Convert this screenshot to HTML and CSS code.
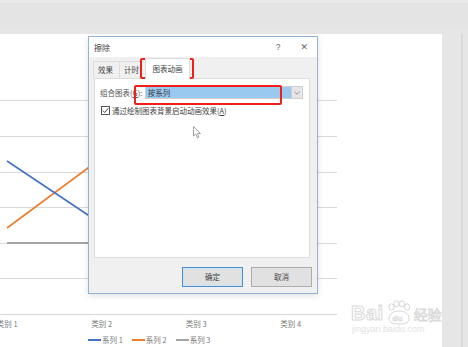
FILE: index.html
```html
<!DOCTYPE html>
<html lang="zh">
<head>
<meta charset="utf-8">
<link rel="stylesheet" href="styles.css">
</head>
<body>
<div class="screen">
  <div class="topbar"></div>
  <div class="workspace">
    <div class="slide">
      <svg class="plot" width="337" height="282" viewBox="0 0 337 282">
        <g stroke="#d9d9d9" stroke-width="1">
          <line x1="0" y1="66.5" x2="337" y2="66.5"/>
          <line x1="0" y1="102.5" x2="337" y2="102.5"/>
          <line x1="0" y1="138.5" x2="337" y2="138.5"/>
          <line x1="0" y1="173.5" x2="337" y2="173.5"/>
          <line x1="0" y1="209.5" x2="337" y2="209.5"/>
          <line x1="0" y1="244.5" x2="337" y2="244.5"/>
          <line x1="0" y1="280.5" x2="337" y2="280.5"/>
        </g>
        <polyline fill="none" stroke="#a5a5a5" stroke-width="2" points="7,209 101.5,209 196,173 290.5,138"/>
        <polyline fill="none" stroke="#ed7d31" stroke-width="1.6" points="7,194 101.5,124 196,160 290.5,102"/>
        <polyline fill="none" stroke="#4472c4" stroke-width="1.6" points="7,127 101.5,190 196,150 290.5,95"/>
      </svg>
      <div class="cats">
        <span>类别 1</span><span>类别 2</span><span>类别 3</span><span>类别 4</span>
      </div>
      <div class="legend">
        <span class="key"><i class="sw blue"></i>系列 1</span>
        <span class="key"><i class="sw orange"></i>系列 2</span>
        <span class="key"><i class="sw gray"></i>系列 3</span>
      </div>
      <div class="watermark">
        <div class="wm-top">
          <span class="wm-bai">Bai</span>
          <svg class="wm-paw" width="28" height="25" viewBox="0 0 28 25">
            <g fill="none" stroke="#d6d6d6" stroke-width="1">
              <ellipse cx="6.5" cy="7" rx="2.6" ry="3.2"/>
              <ellipse cx="11.5" cy="3.8" rx="2.6" ry="3"/>
              <ellipse cx="17" cy="3.8" rx="2.6" ry="3"/>
              <ellipse cx="22" cy="7" rx="2.6" ry="3.2"/>
              <path d="M4 19 C4 13 9 11 14 11 C19 11 24 13 24 19 C24 23 19 24 14 24 C9 24 4 23 4 19 Z"/>
            </g>
            <text x="7.5" y="21" class="wm-du">du</text>
          </svg>
          <span class="wm-cn">经验</span>
        </div>
        <div class="wm-url">jingyan.baidu.com</div>
      </div>
    </div>
    <div class="rightpane"><div class="rline"></div></div>
  </div>

  <div class="dialog">
    <div class="titlebar">
      <span class="title">擦除</span>
      <span class="tb-btns"><span class="help">?</span><span class="close">✕</span></span>
    </div>
    <div class="dbody">
      <div class="tabs">
        <span class="tab">效果</span>
        <span class="tab">计时</span>
        <span class="tab active">图表动画</span>
      </div>
      <div class="panel">
        <div class="row">
          <span class="label">组合图表(<u>G</u>):</span>
          <div class="select">
            <span class="sel-text">按系列</span>
            <span class="sel-btn">
              <svg width="6" height="4" viewBox="0 0 6 4"><path d="M0.5 0.8 L3 3.2 L5.5 0.8" fill="none" stroke="#888" stroke-width="0.9"/></svg>
            </span>
          </div>
        </div>
        <div class="row check-row">
          <span class="checkbox">
            <svg width="9" height="9" viewBox="0 0 9 9"><path d="M1.8 4.6 L3.7 6.5 L7.3 2.3" fill="none" stroke="#444" stroke-width="1"/></svg>
          </span>
          <span class="check-label">通过绘制图表背景启动动画效果(<u>A</u>)</span>
        </div>
      </div>
      <div class="buttons">
        <span class="btn primary">确定</span>
        <span class="btn">取消</span>
      </div>
    </div>
  </div>

  <div class="hl hl-tab"></div>
  <div class="hl hl-select"></div>
  <svg class="cursor" width="9" height="13" viewBox="0 0 9 13">
    <path d="M0.5 0.5 L0.5 10 L2.8 8 L4.4 11.8 L6 11.1 L4.4 7.5 L7.5 7.5 Z" fill="#fff" stroke="#8a8a8a" stroke-width="0.8"/>
  </svg>
</div>
</body>
</html>
```

FILE: styles.css
```css
* { box-sizing: border-box; }
html, body { margin: 0; padding: 0; }
body {
  width: 468px;
  height: 347px;
  overflow: hidden;
  background: #e6e6e6;
  font-family: "Noto Sans CJK SC", "Liberation Sans", sans-serif;
}
.screen {
  position: relative;
  width: 468px;
  height: 347px;
  overflow: hidden;
  display: flex;
  flex-direction: column;
}
.topbar {
  height: 34px;
  flex: none;
  background: linear-gradient(#e9e9e9 0, #e9e9e9 3px, #e4e4e4 3px, #e4e4e4 27px, #e6e6e6 28px);
}
.workspace {
  flex: 1;
  display: flex;
}
.slide {
  width: 442px;
  height: 313px;
  background: #fff;
  position: relative;
  display: flex;
  flex-direction: column;
}
.plot { display: block; flex: none; }
.cats {
  display: grid;
  grid-template-columns: repeat(4, 94.5px);
  margin-left: -40px;
  margin-top: 3px;
  font-size: 7.5px;
  line-height: 10px;
  color: #7a7a7a;
  text-align: center;
}
.legend {
  display: flex;
  gap: 9px;
  margin-left: 88px;
  margin-top: 6px;
  font-size: 7.5px;
  line-height: 10px;
  color: #7a7a7a;
}
.key { display: flex; align-items: center; gap: 1px; }
.sw { display: inline-block; width: 13px; height: 1.6px; }
.sw.blue { background: #4472c4; }
.sw.orange { background: #ed7d31; }
.sw.gray { background: #a5a5a5; }

.watermark {
  position: absolute;
  left: 351px;
  top: 261px;
  width: 92px;
  display: flex;
  flex-direction: column;
  align-items: flex-start;
}
.wm-top { display: flex; align-items: flex-end; height: 28px; }
.wm-bai {
  font-family: "Liberation Sans", sans-serif;
  font-weight: bold;
  font-size: 20px;
  line-height: 19px;
  color: #fff;
  -webkit-text-stroke: 1px #dadada;
  letter-spacing: 0.5px;
}
.wm-paw { display: block; margin: 0 0 -2px 1px; }
.wm-du {
  font-family: "Liberation Sans", sans-serif;
  font-size: 8px;
  font-weight: bold;
  fill: #fff;
  stroke: #d6d6d6;
  stroke-width: 0.6px;
}
.wm-cn {
  font-size: 14px;
  line-height: 17px;
  color: #fff;
  -webkit-text-stroke: 0.8px #dadada;
  margin-left: 1px;
}
.wm-url {
  font-family: "Liberation Sans", sans-serif;
  font-size: 9px;
  line-height: 11px;
  color: #e2e2e2;
  margin-top: 1px;
  margin-left: 1px;
}
.rightpane {
  flex: 1;
  position: relative;
  display: flex;
  justify-content: flex-end;
  padding-right: 5px;
}
.rline {
  width: 2px;
  height: 313px;
  background: #dadada;
}

/* Dialog */
.dialog {
  position: absolute;
  left: 88px;
  top: 36px;
  width: 230px;
  height: 258px;
  border: 1px solid #93b4d6;
  background: #f0f0f0;
  box-shadow: 0 2px 6px rgba(0,0,0,0.12);
  display: flex;
  flex-direction: column;
  font-size: 7.5px;
  color: #333;
}
.titlebar {
  height: 20px;
  background: #fff;
  display: flex;
  align-items: center;
  justify-content: space-between;
  padding: 0 9px 0 5px;
  flex: none;
}
.title { font-size: 8px; color: #444; }
.tb-btns { display: flex; align-items: center; gap: 20px; color: #666; }
.help { font-family: "Liberation Sans", sans-serif; font-size: 8.5px; }
.close { font-family: "DejaVu Sans", sans-serif; font-size: 9px; color: #666; }
.dbody {
  flex: 1;
  display: flex;
  flex-direction: column;
  padding: 0 5px 6px 5px;
}
.tabs {
  display: flex;
  align-items: flex-end;
  height: 21px;
  margin-left: -1px;
}
.tab {
  width: 27px;
  height: 17px;
  line-height: 16px;
  padding-left: 4px;
  border: 1px solid #dcdcdc;
  border-bottom: none;
  margin-right: -1px;
  color: #444;
  background: #f0f0f0;
  white-space: nowrap;
}
.tab.active {
  width: 45px;
  height: 21px;
  line-height: 20px;
  background: #fff;
  padding-left: 0;
  text-align: center;
  position: relative;
  z-index: 1;
  margin-bottom: -1px;
}
.panel {
  height: 180px;
  margin-left: 0;
  margin-right: 2px;
  background: #fff;
  border: 1px solid #dcdcdc;
  padding: 7px 6px 0 5px;
  display: flex;
  flex-direction: column;
  gap: 6px;
}
.row { display: flex; align-items: center; }
.label { width: 45px; color: #555; white-space: nowrap; }
.select {
  width: 159px;
  height: 13px;
  display: flex;
  border: 1px solid #cfcfcf;
  background: #fff;
}
.sel-text {
  flex: 1;
  background: #99c9ef;
  line-height: 11px;
  padding-left: 2px;
  color: #3a3a3a;
}
.sel-btn {
  width: 11px;
  background: #e5e5e5;
  border-left: 1px solid #d0d0d0;
  display: flex;
  align-items: center;
  justify-content: center;
}
.check-row { padding-left: 1px; }
.checkbox {
  width: 9px;
  height: 9px;
  border: 1px solid #555;
  display: flex;
  align-items: center;
  justify-content: center;
  margin-right: 2px;
  background: #fff;
}
.checkbox svg { display: block; flex: none; }
.check-label { color: #444; white-space: nowrap; }
.buttons {
  margin-top: auto;
  display: flex;
  justify-content: flex-end;
  gap: 8px;
}
.btn {
  width: 61px;
  height: 20px;
  line-height: 18px;
  text-align: center;
  background: #e1e1e1;
  border: 1px solid #adadad;
  color: #444;
}
.btn.primary {
  border: 1px solid #4a90d0;
  box-shadow: inset 0 0 0 1px #cfe3f5;
}

/* Overlays */
.hl {
  position: absolute;
  border: 2px solid #f01f17;
  border-radius: 2px;
}
.hl-tab { left: 140px; top: 58px; width: 54px; height: 21px; }
.hl-select { left: 134px; top: 85px; width: 148px; height: 20px; }
.cursor { position: absolute; left: 193px; top: 126px; }
```
